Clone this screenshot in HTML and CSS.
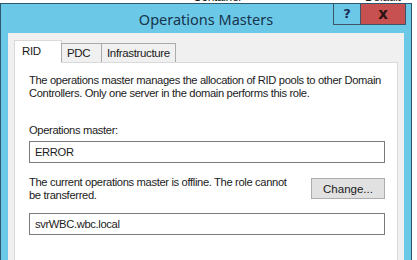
FILE: index.html
```html
<!DOCTYPE html>
<html lang="en">
<head>
  <meta charset="UTF-8">
  <title>Operations Masters</title>
  <link rel="stylesheet" href="styles.css">
</head>
<body>

  <div class="backdrop">
    <span class="col-name">Container</span>
    <span class="col-default">Default</span>
  </div>

  <div class="window">
    <div class="titlebar">
      <span class="title">Operations Masters</span>
      <div class="caption-buttons">
        <span class="btn-help">?</span>
        <span class="btn-close">x</span>
      </div>
    </div>

    <div class="client">
      <div class="tabs">
        <div class="tab active">RID</div>
        <div class="tab">PDC</div>
        <div class="tab">Infrastructure</div>
      </div>

      <div class="panel">
        <p class="info">The operations master manages the allocation of RID pools to other Domain Controllers. Only one server in the domain performs this role.</p>

        <label class="field-label">Operations master:</label>
        <div class="textbox">ERROR</div>

        <div class="change-row">
          <p class="status">The current operations master is offline. The role cannot be transferred.</p>
          <button class="change-btn">Change...</button>
        </div>

        <div class="textbox">svrWBC.wbc.local</div>
      </div>
    </div>
  </div>

</body>
</html>
```

FILE: styles.css
```css
body {
  margin: 0;
  padding: 0;
  background: #fff;
  font-family: "Liberation Sans", Arial, sans-serif;
  font-size: 11.2px;
  letter-spacing: -0.35px;
  color: #1b1b1b;
  overflow: hidden;
}

.backdrop {
  height: 3px;
  overflow: hidden;
  position: relative;
  font-size: 12px;
  line-height: 12px;
}

.backdrop span {
  position: absolute;
  top: -9px;
}

.col-name { left: 193px; }
.col-default { left: 365px; }

.window {
  width: 412px;
  height: 257px;
  border: 1px solid #2d5870;
  border-bottom: none;
  background: #6bc8e7;
  padding: 0 7px;
  box-sizing: border-box;
  position: relative;
  overflow: hidden;
}

.titlebar {
  height: 29px;
  text-align: center;
}

.title {
  font-family: "Noto Sans", "Open Sans", sans-serif;
  font-size: 14.5px;
  letter-spacing: 0;
  line-height: 30px;
  color: #17344c;
}

.caption-buttons {
  position: absolute;
  top: -1px;
  right: 5px;
  display: flex;
}

.caption-buttons span {
  height: 20px;
  line-height: 20px;
  text-align: center;
  font-family: "DejaVu Sans", sans-serif;
  font-weight: bold;
  letter-spacing: 0;
  border: 1px solid #3d5566;
  box-sizing: content-box;
}

.btn-help {
  width: 26px;
  background: #6bc8e7;
  color: #1c2e57;
  font-size: 13px;
  border-right: none !important;
}

.btn-close {
  width: 44px;
  background: #c75050;
  color: #2a1414;
  font-size: 15px;
}

.client {
  background: #f0f0f0;
  padding: 8px 6px 0 6px;
  height: 240px;
}

.tabs {
  display: flex;
  align-items: flex-end;
  height: 21px;
  position: relative;
  z-index: 1;
  font-size: 11.5px;
}

.tab {
  height: 18px;
  line-height: 18px;
  padding: 0 5px;
  background: #f0f0f0;
  border: 1px solid #acacac;
  border-bottom: none;
  margin-left: -1px;
}

.tab:first-child {
  margin-left: 0;
}

.tab.active {
  height: 22px;
  line-height: 20px;
  width: 34px;
  padding: 0 5px 0 7px;
  background: #fff;
  margin-bottom: -1px;
  border-color: #d9d9d9;
}

.tab:nth-child(2) {
  width: 30px;
  padding-left: 5px;
  padding-right: 4px;
}

.panel {
  background: #fff;
  border: 1px solid #d9d9d9;
  padding: 11px 12px 0 14px;
  height: 220px;
}

.info,
.status {
  margin: 0;
  line-height: 13px;
}

.info {
  margin-right: -3px;
}

.field-label {
  display: block;
  margin-top: 24px;
  line-height: 13px;
}

.textbox {
  margin-top: 4px;
  height: 20px;
  line-height: 20px;
  border: 1px solid #7a7a7a;
  padding: 0 5px;
}

.change-row {
  display: flex;
  justify-content: space-between;
  align-items: flex-start;
  margin-top: 13px;
  margin-bottom: 11px;
}

.status {
  width: 262px;
}

.change-btn {
  width: 74px;
  height: 21px;
  margin-top: 2px;
  background: #e1e1e1;
  border: 1px solid #adadad;
  font-family: "Liberation Sans", Arial, sans-serif;
  font-size: 11.5px;
  color: #1b1b1b;
  padding: 0;
}
```
